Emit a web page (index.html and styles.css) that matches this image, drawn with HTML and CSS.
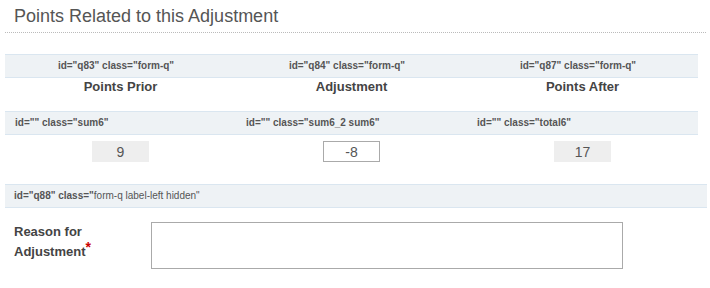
FILE: index.html
```html
<!DOCTYPE html>
<html lang="en">
<head>
    <meta charset="UTF-8">
    <title>Points Related to this Adjustment</title>
    <link rel="stylesheet" href="styles.css">
</head>
<body>

    <div class="section">
        <h2 class="section-title">Points Related to this Adjustment</h2>

        <!-- заголовки вопросов -->
        <div class="q-row q-band centered">
            <div class="q-cell">id="q83" class="form-q"</div>
            <div class="q-cell">id="q84" class="form-q"</div>
            <div class="q-cell">id="q87" class="form-q"</div>
        </div>
        <div class="q-row q-labels">
            <div class="q-cell">Points Prior</div>
            <div class="q-cell">Adjustment</div>
            <div class="q-cell">Points After</div>
        </div>

        <div class="q-row q-band sums">
            <div class="q-cell">id="" class="sum6"</div>
            <div class="q-cell">id="" class="sum6_2 sum6"</div>
            <div class="q-cell">id="" class="total6"</div>
        </div>
        <div class="q-row q-values">
            <div class="q-cell"><input class="num locked" type="text" value="9" readonly></div>
            <div class="q-cell"><input class="num" type="text" value="-8"></div>
            <div class="q-cell"><input class="num locked" type="text" value="17" readonly></div>
        </div>

        <div class="q-band wide">id="q88" class="<span class="plain">form-q label-left hidden"</span></div>
        <div class="reason">
            <label class="reason-label" for="reason">Reason for Adjustment<span class="req">*</span></label>
            <textarea id="reason" class="reason-text"></textarea>
        </div>
    </div>

</body>
</html>
```

FILE: styles.css
```css
html, body {
    margin: 0;
    padding: 0;
    background-color: #fff;
    font-family: "Liberation Sans", Arial, sans-serif;
    color: #444;
}

.section {
    padding: 0 0 0 5px;
}

.section-title {
    width: 701px;
    margin: 0;
    padding: 6px 0 6px 9px;
    box-sizing: border-box;
    font-size: 18px;
    line-height: 20px;
    font-weight: normal;
    color: #555;
    border-bottom: 1px dotted #bbb;
}

.q-row {
    display: grid;
    grid-template-columns: repeat(3, 231px);
    width: 693px;
}

.q-band {
    height: 22px;
    line-height: 22px;
    background-color: #eef2f5;
    border-top: 1px solid #dae6f0;
    border-bottom: 1px solid #dae6f0;
    font-size: 10px;
    font-weight: bold;
    color: #555;
}

.q-band.centered {
    margin-top: 21px;
    text-align: center;
}

.q-band.centered .q-cell {
    padding-right: 9px;
}

.q-labels {
    padding-top: 1px;
    line-height: 16px;
    font-size: 13px;
    font-weight: bold;
    text-align: center;
}

.q-band.sums {
    margin-top: 16px;
}

.q-band.sums .q-cell {
    padding-left: 10px;
}

.q-values {
    margin-top: 6px;
    text-align: center;
}

.num {
    width: 57px;
    height: 21px;
    box-sizing: border-box;
    margin: 0;
    padding: 0;
    border: 1px solid #aaa;
    background-color: #fff;
    font-family: "Liberation Sans", Arial, sans-serif;
    font-size: 14px;
    color: #555;
    text-align: center;
    vertical-align: top;
}

.num.locked {
    border-color: #eee;
    background-color: #eee;
}

.q-band.wide {
    width: 693px;
    margin-top: 22px;
    padding-left: 9px;
}

.q-band .plain {
    font-weight: normal;
}

.reason {
    display: flex;
    align-items: flex-start;
    margin-top: 14px;
}

.reason-label {
    width: 137px;
    padding-left: 9px;
    font-size: 13px;
    line-height: 20px;
    font-weight: bold;
}

.req {
    color: #c00;
    font-size: 14px;
    vertical-align: 4px;
    line-height: 0;
}

.reason-text {
    width: 472px;
    height: 47px;
    box-sizing: border-box;
    margin: 0;
    border: 1px solid #aaa;
    resize: none;
}
```
